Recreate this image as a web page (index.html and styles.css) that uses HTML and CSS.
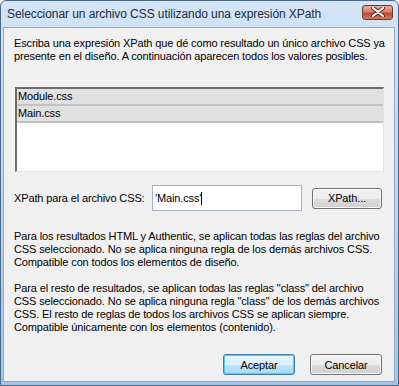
FILE: index.html
```html
<!DOCTYPE html>
<html lang="es">
<head>
    <meta charset="UTF-8">
    <title>Seleccionar un archivo CSS</title>
    <link rel="stylesheet" href="styles.css">
</head>
<body>
    <div class="window">
        <div class="titlebar">
            <span class="title">Seleccionar un archivo CSS utilizando una expresión XPath</span>
            <button class="close" aria-label="Cerrar">
                <svg width="14" height="10" viewBox="0 0 14 10">
                    <path d="M2 1 L12 9 M12 1 L2 9" stroke="#5a2a22" stroke-width="4" stroke-linecap="round"/>
                    <path d="M2 1 L12 9 M12 1 L2 9" stroke="#ffffff" stroke-width="2.2" stroke-linecap="round"/>
                </svg>
            </button>
        </div>

        <div class="client">
            <p class="intro">Escriba una expresión XPath que dé como resultado un único archivo CSS ya<br>presente en el diseño. A continuación aparecen todos los valores posibles.</p>

            <div class="listbox">
                <div class="item">Module.css</div>
                <div class="item">Main.css</div>
            </div>

            <div class="xpath-row">
                <label class="xpath-label">XPath para el archivo CSS:</label>
                <div class="field">'Main.css'<span class="caret"></span></div>
                <button class="btn btn-xpath">XPath...</button>
            </div>

            <p class="note">Para los resultados HTML y Authentic, se aplican todas las reglas del archivo<br>CSS seleccionado. No se aplica ninguna regla de los demás archivos CSS.<br>Compatible con todos los elementos de diseño.</p>
            <p class="note note-second">Para el resto de resultados, se aplican todas las reglas "class" del archivo<br>CSS seleccionado. No se aplica ninguna regla "class" de los demás archivos<br>CSS. El resto de reglas de todos los archivos CSS se aplican siempre.<br>Compatible únicamente con los elementos (contenido).</p>

            <div class="actions">
                <button class="btn btn-default">Aceptar</button>
                <button class="btn">Cancelar</button>
            </div>
        </div>
    </div>
</body>
</html>
```

FILE: styles.css
```css
html, body {
    margin: 0;
    padding: 0;
    background: #ffffff;
}

/* Window frame */
.window {
    width: 399px;
    height: 386px;
    box-sizing: border-box;
    border: 1px solid #4a6788;
    border-radius: 6px 6px 0 0;
    background: linear-gradient(to bottom, #d3e4f6 0%, #bcd4ee 60%, #9fc6e8 100%);
    padding: 0 3px 3px 2px;
    display: flex;
    flex-direction: column;
    font-family: "Liberation Sans", Arial, sans-serif;
    color: #000;
}

/* Title bar */
.titlebar {
    height: 26px;
    display: flex;
    align-items: center;
    padding-left: 4px;
}

.title {
    font-size: 12px;
    letter-spacing: -0.07px;
    color: #1e2a3a;
    flex: 1;
    white-space: nowrap;
}

.close {
    width: 31px;
    height: 15px;
    margin-right: 2px;
    margin-top: -4px;
    padding: 0;
    border: 1px solid #6b3a32;
    border-radius: 3px;
    background: linear-gradient(to bottom, #e9ab9c 0%, #d8806b 45%, #c14a30 55%, #d4785d 100%);
    display: flex;
    align-items: center;
    justify-content: center;
}

/* Client area */
.client {
    flex: 1;
    background: #f0f0f0;
    border: 1px solid #8fa8c6;
    padding: 9px 10px 0 10px;
    display: flex;
    flex-direction: column;
    font-size: 11px;
    line-height: 13px;
    letter-spacing: -0.13px;
}

.intro {
    margin: 0;
    white-space: nowrap;
}

/* List of CSS files */
.listbox {
    margin-top: 24px;
    height: 85px;
    box-sizing: border-box;
    background: #ffffff;
    border-top: 2px solid #6d6d6d;
    border-left: 2px solid #6d6d6d;
    border-right: 1px solid #e3e3e3;
    border-bottom: 1px solid #e3e3e3;
    margin-left: 1px;
}

.item {
    height: 15px;
    line-height: 15px;
    padding-left: 1px;
    background: #e0e0e0;
    border-bottom: 2px solid #c2c2c2;
}

/* XPath row */
.xpath-row {
    margin-top: 13px;
    height: 26px;
    display: flex;
    align-items: center;
}

.xpath-label {
    width: 138px;
}

.field {
    width: 150px;
    height: 26px;
    box-sizing: border-box;
    background: #ffffff;
    border: 1px solid #a7b3c4;
    border-top-color: #abadb3;
    padding-left: 2px;
    line-height: 24px;
    display: flex;
    align-items: center;
}

.caret {
    display: inline-block;
    width: 1px;
    height: 13px;
    background: #000;
}

.btn {
    width: 72px;
    height: 21px;
    padding: 0;
    font-family: "Liberation Sans", Arial, sans-serif;
    font-size: 11px;
    letter-spacing: -0.13px;
    color: #000;
    border: 1px solid #707070;
    border-radius: 3px;
    background: linear-gradient(to bottom, #f2f2f2 0%, #ebebeb 50%, #dddddd 51%, #cfcfcf 100%);
    box-shadow: inset 0 0 0 1px #fbfbfb;
}

.btn-xpath {
    width: 70px;
    margin-left: 10px;
}

.btn-default {
    border-color: #3c7fb1;
    background: linear-gradient(to bottom, #eaf6fd 0%, #d9f0fc 50%, #bee6fd 51%, #a7d9f5 100%);
    box-shadow: inset 0 0 0 1px #48d0f8;
}

/* Explanations */
.note {
    margin: 19px 0 0 0;
    white-space: nowrap;
}

.note-second {
    margin-top: 13px;
}

.actions {
    margin-top: 20px;
    margin-right: 2px;
    display: flex;
    justify-content: flex-end;
    gap: 15px;
}
```
